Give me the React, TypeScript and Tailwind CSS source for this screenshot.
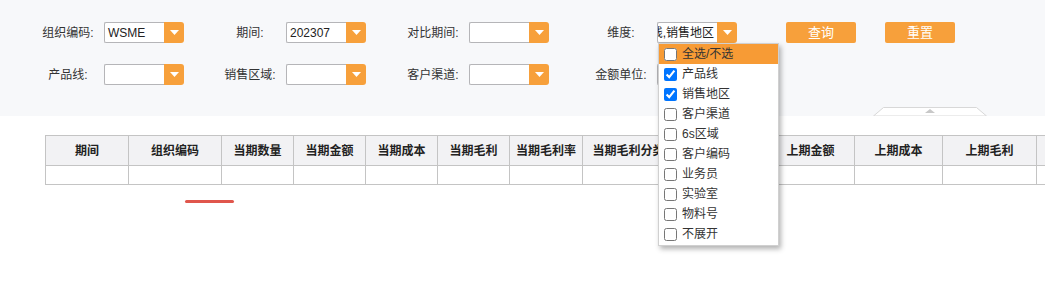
import React from "react";

const font = { fontFamily: '"Liberation Sans", "Noto Sans CJK SC", sans-serif' };

// orange drop-down trigger with a small white caret
function Caret() {
  return (
    <div className="flex h-[21px] w-[20px] items-center justify-center rounded-r-[3px] bg-[#f7a03b]">
      <svg width="9" height="5" viewBox="0 0 9 5">
        <path d="M0 0 L9 0 L4.5 5 Z" fill="#fff" />
      </svg>
    </div>
  );
}

type ComboProps = { value?: string; tail?: boolean; children?: React.ReactNode };

function Combo({ value = "", tail, children }: ComboProps) {
  return (
    <div className="relative flex w-[80px]">
      <div
        className={`flex h-[21px] w-[60px] items-center overflow-hidden rounded-l-[2px] border border-r-0 border-[#b5b5b8] bg-white ${tail ? "justify-end" : "justify-start"}`}
      >
        <span className="shrink-0 whitespace-nowrap px-[3px] text-[12px] text-[#222]">{value}</span>
      </div>
      <Caret />
      {children}
    </div>
  );
}

function Field({ label, value, tail, children }: { label: string } & ComboProps) {
  return (
    <div className="flex items-center">
      <div className="w-[72px] text-center text-[12px] text-[#333]">{label}</div>
      <Combo value={value} tail={tail}>
        {children}
      </Combo>
    </div>
  );
}

const dims = [
  { name: "全选/不选", checked: false, active: true },
  { name: "产品线", checked: true },
  { name: "销售地区", checked: true },
  { name: "客户渠道", checked: false },
  { name: "6s区域", checked: false },
  { name: "客户编码", checked: false },
  { name: "业务员", checked: false },
  { name: "实验室", checked: false },
  { name: "物料号", checked: false },
  { name: "不展开", checked: false },
];

function DimMenu() {
  return (
    <div className="absolute left-[1px] top-[21px] z-10 w-[121px] border border-[#d0d0d0] bg-white pb-[1px] shadow-[2px_3px_5px_rgba(0,0,0,0.3)]">
      {dims.map((d) => (
        <div
          key={d.name}
          className={`flex h-[20px] items-center gap-[5px] pl-[5px] text-[12px] text-[#333] ${d.active ? "bg-[#f79b35]" : ""}`}
        >
          <input type="checkbox" readOnly checked={d.checked} className="m-0 h-[13px] w-[13px]" />
          <span>{d.name}</span>
        </div>
      ))}
    </div>
  );
}

const cols: [string, number][] = [
  ["期间", 83],
  ["组织编码", 93],
  ["当期数量", 72],
  ["当期金额", 72],
  ["当期成本", 72],
  ["当期毛利", 72],
  ["当期毛利率", 73],
  ["当期毛利分类", 92],
  ["上期数量", 92],
  ["上期金额", 88],
  ["上期成本", 88],
  ["上期毛利", 94],
  ["上期毛利率", 90],
];

export default function App() {
  return (
    <div className="h-[302px] w-[1045px] overflow-hidden bg-white" style={font}>
      {/* filter panel */}
      <div className="relative h-[116px] bg-[#f7f8fa] pl-[32px] pt-[22px]">
        <div className="grid grid-cols-[182px_183px_188px_auto] gap-y-[21px]">
          <Field label="组织编码:" value="WSME" />
          <Field label="期间:" value="202307" />
          <Field label="对比期间:" />
          <div className="flex items-center">
            <Field label="维度:" value="产品线,销售地区" tail>
              <DimMenu />
            </Field>
            <button className="ml-[49px] h-[21px] w-[70px] rounded-[2px] bg-[#f7a03b] text-[13px] text-white">查询</button>
            <button className="ml-[29px] h-[21px] w-[70px] rounded-[2px] bg-[#f7a03b] text-[13px] text-white">重置</button>
          </div>
          <Field label="产品线:" />
          <Field label="销售区域:" />
          <Field label="客户渠道:" />
          <Field label="金额单位:" />
        </div>
        {/* collapse handle */}
        <svg className="absolute bottom-0 left-[873px]" width="114" height="9" viewBox="0 0 114 9">
          <path d="M0.5 9 L10.5 0.5 L103.5 0.5 L113.5 9 Z" fill="#fff" stroke="#d8d8d8" />
          <path d="M52 6 L57 2 L62 6 Z" fill="#c8c8c8" />
        </svg>
      </div>

      {/* result grid */}
      <div className="pl-[45px] pt-[19px]">
        <table className="w-[1081px] table-fixed border-collapse text-[12px] text-[#222]">
          <colgroup>
            {cols.map(([n, w]) => (
              <col key={n} style={{ width: w }} />
            ))}
          </colgroup>
          <thead>
            <tr className="h-[30px] bg-[#f2f2f4]">
              {cols.map(([n]) => (
                <th key={n} className="overflow-hidden whitespace-nowrap border border-[#c4c4c4] p-0 text-center font-bold">
                  {n}
                </th>
              ))}
            </tr>
          </thead>
          <tbody>
            <tr className="h-[19px]">
              {cols.map(([n]) => (
                <td key={n} className="border border-[#c4c4c4] p-0" />
              ))}
            </tr>
          </tbody>
        </table>
        <div className="ml-[140px] mt-[15px] h-[3px] w-[49px] rounded-full bg-[#e0564c]" />
      </div>
    </div>
  );
}
